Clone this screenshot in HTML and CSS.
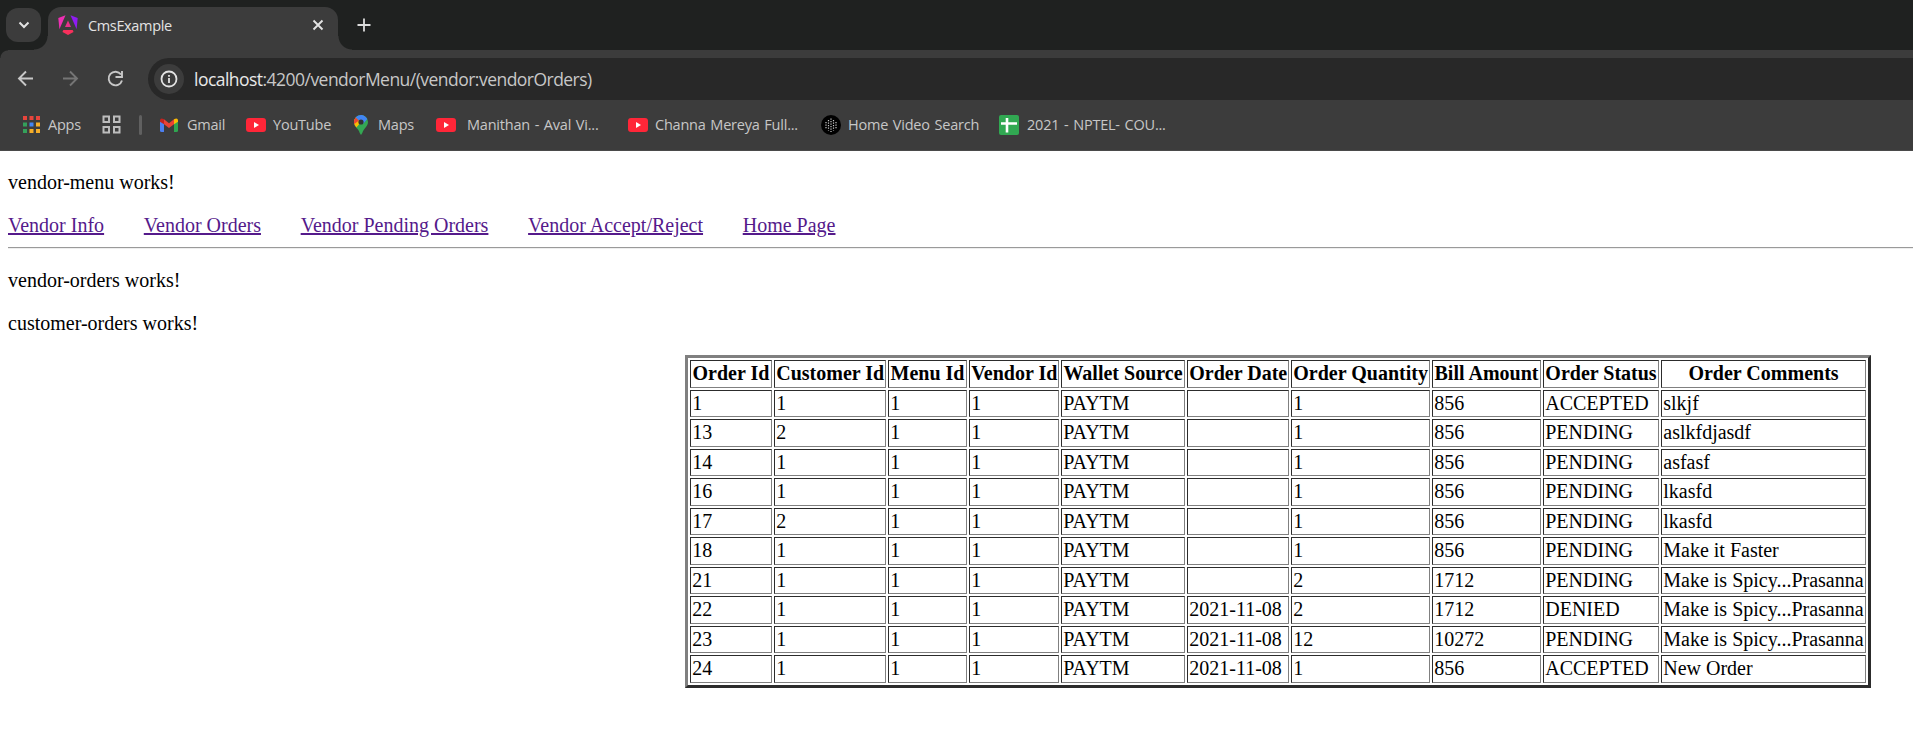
FILE: index.html
```html
<!DOCTYPE html>
<html lang="en">
<head>
<meta charset="utf-8">
<title>CmsExample</title>
<link rel="stylesheet" href="styles.css">
</head>
<body>
<header class="browser">
  <div class="tabstrip">
    <div class="tab-search"><svg width="35" height="34" viewBox="0 0 35 34"><path d="M13.500 14.500l4.500 4.500L22.500 14.500" fill="none" stroke="#e3e3e3" stroke-width="2"/></svg></div>
    <div class="tab">
      <svg class="favicon" width="20" height="20" viewBox="0 0 20 20">
        <path d="M12.500 .3L19.700 3l-1.100 11.200z" fill="#8f1cf2"/>
        <path d="M10 5.500l3 6.500H7z" fill="#e8308a"/>
        <path d="M5.300 15h9.400l.8 2L10 20l-5.500-3z" fill="#f8305c"/>
        <path d="M7.500 .3L.3 3l1.100 11.200z" fill="#ef2fb4"/>
      </svg>
      <span class="tab-title">CmsExample</span>
      <svg class="tab-close" width="12" height="12" viewBox="0 0 12 12"><path d="M1.500 1.500l9 9m0-9l-9 9" stroke="#e3e3e3" stroke-width="1.900"/></svg>
    </div>
    <svg class="new-tab" width="14" height="14" viewBox="0 0 14 14"><path d="M7 .5v13M.5 7h13" stroke="#dcdcdc" stroke-width="1.800"/></svg>
  </div>
  <div class="toolbar">
    <svg class="nav-icons" width="148" height="42" viewBox="0 0 148 42" fill="none" stroke="#c7c7c7" stroke-width="1.900">
      <path d="M33 20.500H19.500M26 13.500l-7 7 7 7"/>
      <path d="M63 20.500h13.500M70 13.500l7 7-7 7" stroke="#757575"/>
      <path d="M121 16.500a6.800 6.800 0 1 0 1 6M122 13v6h-6.500"/>
    </svg>
    <div class="omnibox">
      <div class="site-info"><svg width="18" height="18" viewBox="0 0 18 18" fill="none" stroke="#e3e3e3" stroke-width="1.800"><circle cx="9" cy="9" r="7.500"/><path d="M9 8v5M9 5v1.800"/></svg></div>
      <div class="url"><span class="host">localhost</span>:4200/vendorMenu/(vendor:vendorOrders)</div>
    </div>
  </div>
  <nav class="bookmarks">
    <div class="bm bm-apps"><svg width="17" height="17" viewBox="0 0 17 17"><path d="M0 0h4v4H0zM6.500 0h4v4h-4zM13 0h4v4h-4z" fill="#e8453c"/><path d="M0 6.500h4v4H0zM0 13h4v4H0z" fill="#34a05a"/><path d="M6.500 6.500h4v4h-4z" fill="#4285f4"/><path d="M13 6.500h4v4h-4zM6.500 13h4v4h-4zM13 13h4v4h-4z" fill="#f5ad28"/></svg><span>Apps</span></div>
    <div class="bm bm-grid"><svg width="19" height="19" viewBox="0 0 19 19" fill="none" stroke="#bdbdbd" stroke-width="2"><path d="M1.500 1.500h5.500v5.500H1.500zM12 1.500h5.500v5.500H12zM1.500 12h5.500v5.500H1.500zM12 12h5.500v5.500H12z"/></svg></div>
    <div class="divider"></div>
    <div class="bm bm-gmail"><svg width="18" height="14" viewBox="0 0 18 14"><path d="M0 2v10.500Q0 14 1.500 14H4V4.500z" fill="#4c7ff0"/><path d="M18 2v10.500Q18 14 16.500 14H14V4.500z" fill="#2fa650"/><path d="M4 1.200l5 4 5-4v5L9 10 4 6.200z" fill="#ea4335"/><path d="M0 2.300Q.3-.8 4 1.200v5L0 3.800z" fill="#c5221f"/><path d="M18 2.300Q17.700-.8 14 1.200v5l4-2.400z" fill="#fbbc04"/></svg><span>Gmail</span></div>
    <div class="bm bm-yt"><svg width="20" height="14" viewBox="0 0 20 14"><rect width="20" height="14" rx="3" fill="#ff2638"/><path d="M8 4l5 3-5 3z" fill="#fff"/></svg><span>YouTube</span></div>
    <div class="bm bm-maps"><svg width="14" height="20" viewBox="0 0 14 20"><path d="M7 0a7 7 0 0 1 7 7c0 4.500-4.500 6.500-5.700 11L7 20l-1.300-2C5 14 0 12 0 7a7 7 0 0 1 7-7z" fill="#34a853"/><path d="M0 7a7 7 0 0 1 1.700-4.500L7 7l-4.600 5.600Q0 10 0 7z" fill="#fbbc04"/><path d="M1.700 2.500L5 5.500 .3 9Q0 8.500 0 7q0-2.500 1.700-4.500z" fill="#ea4335"/><path d="M1.700 2.500A7 7 0 0 1 13.300 4L9 9 7 7z" fill="#4285f4"/><circle cx="7" cy="7" r="2.600" fill="#333"/></svg><span>Maps</span></div>
    <div class="bm bm-mani"><svg width="20" height="14" viewBox="0 0 20 14"><rect width="20" height="14" rx="3" fill="#ff2638"/><path d="M8 4l5 3-5 3z" fill="#fff"/></svg><span>Manithan - Aval Vi...</span></div>
    <div class="bm bm-channa"><svg width="20" height="14" viewBox="0 0 20 14"><rect width="20" height="14" rx="3" fill="#ff2638"/><path d="M8 4l5 3-5 3z" fill="#fff"/></svg><span>Channa Mereya Full...</span></div>
    <div class="bm bm-home"><svg width="20" height="20" viewBox="0 0 20 20"><circle cx="10" cy="10" r="10" fill="#000"/><g fill="none" stroke="#c8c8c8" stroke-width="1.200" stroke-dasharray="1.200 1.300"><path d="M5 7v6.500M7.500 5v10.500M10 3.500v13.500M12.500 5v10.500M15 7v6.500"/></g></svg><span>Home Video Search</span></div>
    <div class="bm bm-sheet"><svg width="20" height="20" viewBox="0 0 20 20"><rect width="20" height="20" rx="2" fill="#31a852"/><path d="M8 3v14.500M2 8.500h16" stroke="#fff" stroke-width="2.600"/></svg><span>2021 - NPTEL- COU...</span></div>
  </nav>
</header>
<main class="page">
  <p>vendor-menu works!</p>
  <div class="menu"><a href="#">Vendor Info</a><a href="#">Vendor Orders</a><a href="#">Vendor Pending Orders</a><a href="#">Vendor Accept/Reject</a><a href="#">Home Page</a></div>
  <hr>
  <p>vendor-orders works!</p>
  <p>customer-orders works!</p>
  <table class="orders">
    <colgroup><col class="c-order"><col class="c-customer"><col class="c-menu"><col class="c-vendor"><col class="c-wallet"><col class="c-date"><col class="c-quantity"><col class="c-bill"><col class="c-status"><col class="c-comments"></colgroup>
    <thead><tr><th>Order Id</th><th>Customer Id</th><th>Menu Id</th><th>Vendor Id</th><th>Wallet Source</th><th>Order Date</th><th>Order Quantity</th><th>Bill Amount</th><th>Order Status</th><th>Order Comments</th></tr></thead>
    <tbody>
      <tr><td>1</td><td>1</td><td>1</td><td>1</td><td>PAYTM</td><td></td><td>1</td><td>856</td><td>ACCEPTED</td><td>slkjf</td></tr>
      <tr><td>13</td><td>2</td><td>1</td><td>1</td><td>PAYTM</td><td></td><td>1</td><td>856</td><td>PENDING</td><td>aslkfdjasdf</td></tr>
      <tr><td>14</td><td>1</td><td>1</td><td>1</td><td>PAYTM</td><td></td><td>1</td><td>856</td><td>PENDING</td><td>asfasf</td></tr>
      <tr><td>16</td><td>1</td><td>1</td><td>1</td><td>PAYTM</td><td></td><td>1</td><td>856</td><td>PENDING</td><td>lkasfd</td></tr>
      <tr><td>17</td><td>2</td><td>1</td><td>1</td><td>PAYTM</td><td></td><td>1</td><td>856</td><td>PENDING</td><td>lkasfd</td></tr>
      <tr><td>18</td><td>1</td><td>1</td><td>1</td><td>PAYTM</td><td></td><td>1</td><td>856</td><td>PENDING</td><td>Make it Faster</td></tr>
      <tr><td>21</td><td>1</td><td>1</td><td>1</td><td>PAYTM</td><td></td><td>2</td><td>1712</td><td>PENDING</td><td>Make is Spicy...Prasanna</td></tr>
      <tr><td>22</td><td>1</td><td>1</td><td>1</td><td>PAYTM</td><td>2021-11-08</td><td>2</td><td>1712</td><td>DENIED</td><td>Make is Spicy...Prasanna</td></tr>
      <tr><td>23</td><td>1</td><td>1</td><td>1</td><td>PAYTM</td><td>2021-11-08</td><td>12</td><td>10272</td><td>PENDING</td><td>Make is Spicy...Prasanna</td></tr>
      <tr><td>24</td><td>1</td><td>1</td><td>1</td><td>PAYTM</td><td>2021-11-08</td><td>1</td><td>856</td><td>ACCEPTED</td><td>New Order</td></tr>
    </tbody>
  </table>
</main>
</body>
</html>
```
FILE: styles.css
```css
body { margin: 0; height: 732px; overflow: hidden; background: #fff; color: #000; font: 20px/22px "Liberation Serif", "Times New Roman", serif; }
svg { display: block; flex: none; }

.browser { height: 151px; box-sizing: border-box; background: #3c3c3c; border-bottom: 1px solid #4a4a4a; font-family: "Open Sans", "Noto Sans", sans-serif; line-height: 23px; color: #e3e3e3; white-space: nowrap; }
.tabstrip { display: flex; height: 50px; padding-left: 6px; background:
  radial-gradient(circle at 0 0, transparent 13px, #3c3c3c 14px) 34px 36px / 14px 14px no-repeat,
  radial-gradient(circle at 100% 0, transparent 13px, #3c3c3c 14px) 338px 36px / 14px 14px no-repeat,
  #1f2120; }
.tab-search { width: 35px; height: 34px; margin-top: 8px; border-radius: 12px; background: #3c3c3c; }
.tab { display: flex; align-items: center; box-sizing: border-box; width: 290px; height: 43px; margin: 7px 0 0 7px; padding: 0 14px 7px 10px; border-radius: 13px 13px 0 0; background: #3c3c3c; }
.tab-title { flex: 1; margin-left: 10px; font-size: 14.5px; letter-spacing: -0.35px; }
.new-tab { margin: 18px 0 0 19px; }
.toolbar { display: flex; padding-top: 8px; height: 42px; background: radial-gradient(circle at 100% 100%, transparent 7px, #1f2120 8px) 0 0 / 8px 8px no-repeat; }
.omnibox { flex: 1; display: flex; align-items: center; padding-left: 6px; background: #282828; border-radius: 21px 0 0 21px; }
.site-info { display: flex; align-items: center; justify-content: center; width: 30px; height: 30px; border-radius: 50%; background: #3c3c3c; }
.url { margin-left: 10px; font-size: 17.5px; letter-spacing: -0.53px; color: #c7c7c7; }
.host { color: #e8e8e8; }

.bookmarks { display: flex; align-items: center; height: 49px; padding-left: 23px; font-size: 14.5px; letter-spacing: -0.22px; word-spacing: 1.2px; color: #c7c7c7; }
.bm { display: flex; align-items: center; flex: none; gap: 7px; }
.bm span { padding-bottom: 1px; }
.bm-apps { width: 79px; gap: 8px; }
.bm-grid { width: 37px; }
.divider { width: 3px; height: 20px; margin-right: 18px; border-radius: 2px; background: #606060; }
.bm-gmail { width: 86px; gap: 9px; }
.bm-yt { width: 108px; }
.bm-maps { width: 82px; gap: 10px; }
.bm-mani { width: 192px; gap: 11px; }
.bm-channa { width: 193px; }
.bm-home { width: 178px; }
.bm-sheet { gap: 8px; }

.page { padding-left: 8px; display: flow-root; }
.page p { margin: 20px 0; padding-bottom: 1px; }
.menu { display: flex; gap: 39.7px; padding-bottom: 1px; }
.menu a { color: #551a8b; text-decoration-thickness: 2px; text-underline-offset: 1px; }
.page hr { height: 0; margin: 10px 0 20px; border: 0; border-top: 1px solid #9a9a9a; border-bottom: 1px solid #eee; }

.orders { table-layout: fixed; width: 1186px; margin: 20px 0 0 677px; border: 3px solid; border-color: #808080 #2c2c2c #2c2c2c #808080; border-collapse: separate; border-spacing: 2px; white-space: nowrap; }
.orders th, .orders td { height: 22px; padding: 1.25px 1.25px 2.25px; border: 1px solid; border-color: #2c2c2c #808080 #808080 #2c2c2c; }
.orders td { text-align: left; }
.c-order { width: 82px; }
.c-customer { width: 112px; }
.c-menu { width: 79px; }
.c-vendor { width: 90px; }
.c-wallet { width: 124px; }
.c-date { width: 102px; }
.c-quantity { width: 139px; }
.c-bill { width: 109px; }
.c-status { width: 116px; }
.c-comments { width: 205px; }
```
